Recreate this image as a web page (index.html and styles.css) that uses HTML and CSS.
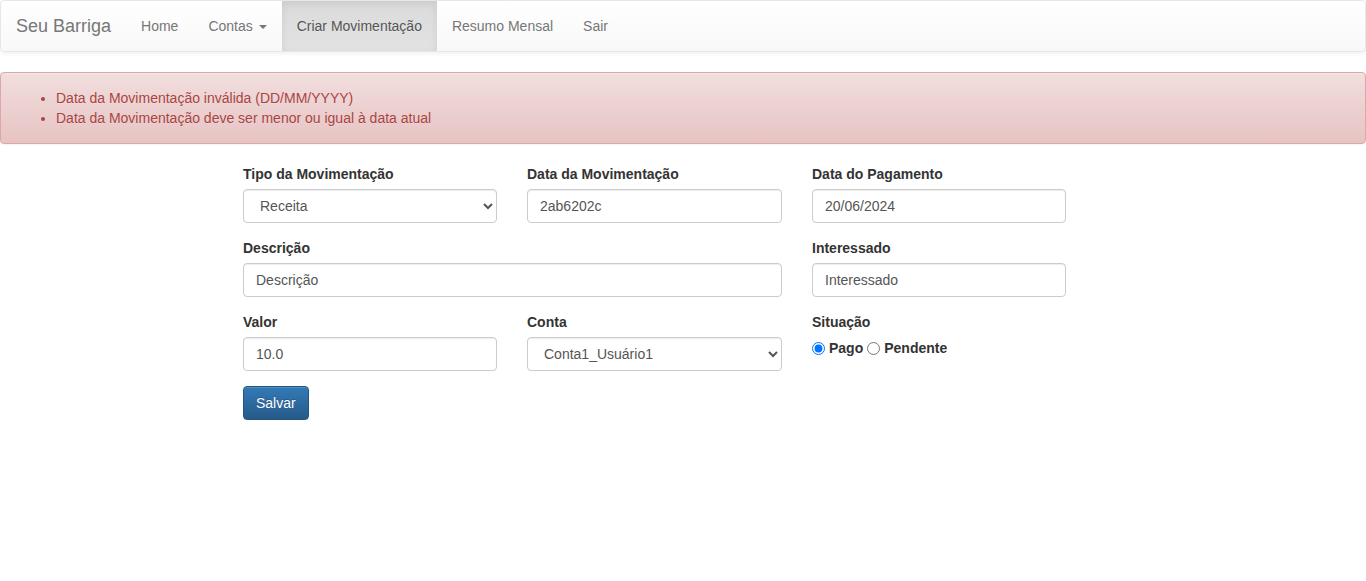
FILE: index.html
```html
<!DOCTYPE html>
<html lang="pt-BR">
<head>
<meta charset="utf-8">
<title>Seu Barriga</title>
<link rel="stylesheet" href="styles.css">
</head>
<body>
<nav class="navbar">
  <a class="brand" href="#">Seu Barriga</a>
  <ul class="nav">
    <li><a href="#">Home</a></li>
    <li><a href="#">Contas <span class="caret"></span></a></li>
    <li class="active"><a href="#">Criar Movimentação</a></li>
    <li><a href="#">Resumo Mensal</a></li>
    <li><a href="#">Sair</a></li>
  </ul>
</nav>
<div class="alert">
  <ul>
    <li>Data da Movimentação inválida (DD/MM/YYYY)</li>
    <li>Data da Movimentação deve ser menor ou igual à data atual</li>
  </ul>
</div>
<form class="form">
  <div class="grid">
    <div class="group">
      <label class="lbl">Tipo da Movimentação</label>
      <select class="control sel"><option>Receita</option><option>Despesa</option></select>
    </div>
    <div class="group">
      <label class="lbl">Data da Movimentação</label>
      <input class="control" type="text" value="2ab6202c">
    </div>
    <div class="group">
      <label class="lbl">Data do Pagamento</label>
      <input class="control" type="text" value="20/06/2024">
    </div>
    <div class="group span2">
      <label class="lbl">Descrição</label>
      <input class="control" type="text" placeholder="Descrição">
    </div>
    <div class="group">
      <label class="lbl">Interessado</label>
      <input class="control" type="text" placeholder="Interessado">
    </div>
    <div class="group">
      <label class="lbl">Valor</label>
      <input class="control" type="text" value="10.0">
    </div>
    <div class="group">
      <label class="lbl">Conta</label>
      <select class="control sel"><option>Conta1_Usuário1</option></select>
    </div>
    <div class="group">
      <label class="lbl">Situação</label>
      <div class="radios">
        <label class="radio"><input type="radio" name="sit" checked> Pago</label>
        <label class="radio"><input type="radio" name="sit"> Pendente</label>
      </div>
    </div>
  </div>
  <button type="button" class="btn">Salvar</button>
</form>
</body>
</html>
```
FILE: styles.css
```css
* { box-sizing: border-box; }
html, body { margin: 0; padding: 0; }
body {
  font-family: "Liberation Sans", Arial, Helvetica, sans-serif;
  font-size: 14px;
  line-height: 20px;
  color: #333;
  background: #fff;
}
.navbar {
  display: flex;
  align-items: stretch;
  height: 52px;
  border: 1px solid #e7e7e7;
  border-radius: 4px;
  background: linear-gradient(to bottom, #fff 0%, #f8f8f8 100%);
  box-shadow: inset 0 1px 0 rgba(255,255,255,.15), 0 1px 5px rgba(0,0,0,.075);
  margin-bottom: 20px;
  padding: 0 15px 0 0;
}
.brand {
  display: block;
  padding: 15px;
  font-size: 18px;
  line-height: 20px;
  color: #777;
  text-decoration: none;
  height: 50px;
}
.nav {
  display: flex;
  list-style: none;
  margin: 0;
  padding: 0;
}
.nav li a {
  display: block;
  padding: 15px;
  color: #777;
  text-decoration: none;
  text-shadow: 0 1px 0 rgba(255,255,255,.25);
  height: 50px;
}
.nav li.active a {
  color: #555;
  background: linear-gradient(to bottom, #dbdbdb 0%, #e2e2e2 100%);
  box-shadow: inset 0 3px 9px rgba(0,0,0,.075);
}
.caret {
  display: inline-block;
  width: 0;
  height: 0;
  margin-left: 2px;
  vertical-align: middle;
  border-top: 4px solid #777;
  border-right: 4px solid transparent;
  border-left: 4px solid transparent;
}
.alert {
  padding: 15px;
  margin-bottom: 20px;
  border: 1px solid #dca7a7;
  border-radius: 4px;
  color: #a94442;
  background: linear-gradient(to bottom, #f2dede 0%, #e7c3c3 100%);
  box-shadow: inset 0 1px 0 rgba(255,255,255,.25), 0 1px 2px rgba(0,0,0,.05);
  text-shadow: 0 1px 0 rgba(255,255,255,.2);
}
.alert ul { margin: 0; padding-left: 40px; }
.form {
  width: 823px;
  margin-left: 243px;
}
.grid {
  display: grid;
  grid-template-columns: 254px 255px 254px;
  column-gap: 30px;
}
.span2 { grid-column: span 2; }
.group { margin-bottom: 15px; }
.lbl {
  display: block;
  font-weight: bold;
  margin-bottom: 5px;
  max-width: 100%;
}
.control {
  display: block;
  width: 100%;
  height: 34px;
  padding: 6px 12px;
  font-family: inherit;
  font-size: 14px;
  line-height: 20px;
  color: #555;
  background: #fff;
  border: 1px solid #ccc;
  border-radius: 4px;
  box-shadow: inset 0 1px 1px rgba(0,0,0,.075);
}
.control::placeholder { color: #555; opacity: 1; }
.sel { padding: 6px 12px; }
.radios { display: flex; gap: 4px; align-items: center; height: 22px; margin-top: 1px; }
.radio {
  font-weight: bold;
  display: inline-flex;
  align-items: center;
  gap: 4px;
  font-size: 14px;
}
.radio input { margin: 0; width: 13px; height: 13px; }
.btn {
  display: inline-block;
  padding: 6px 12px;
  font-family: inherit;
  font-size: 14px;
  line-height: 20px;
  color: #fff;
  text-shadow: 0 -1px 0 rgba(0,0,0,.2);
  background: linear-gradient(to bottom, #337ab7 0%, #265a88 100%);
  border: 1px solid #245580;
  border-radius: 4px;
  box-shadow: inset 0 1px 0 rgba(255,255,255,.15), 0 1px 1px rgba(0,0,0,.05);
  cursor: pointer;
}
```
